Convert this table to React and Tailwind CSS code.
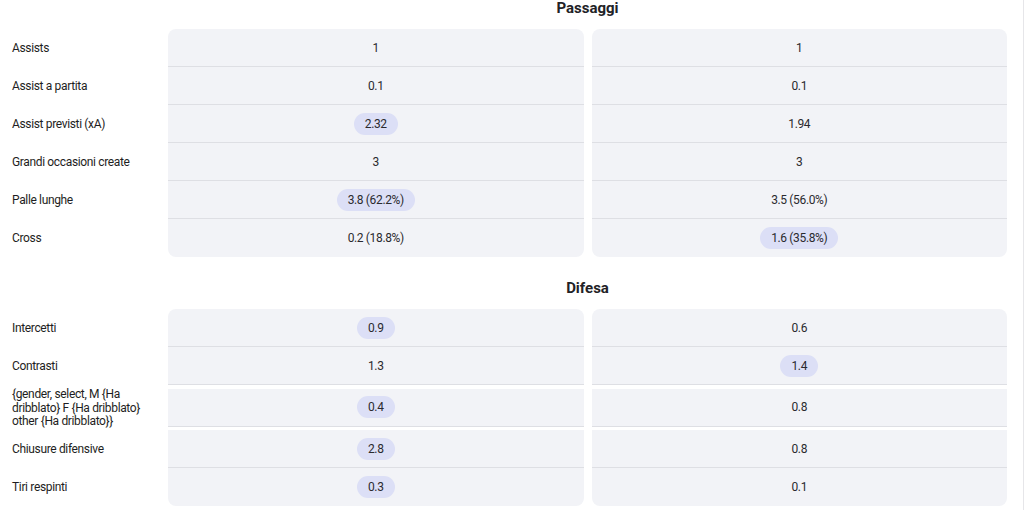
import React from "react";

const sections = [
  {
    title: "Passaggi",
    rows: [
      { label: "Assists", a: "1", b: "1" },
      { label: "Assist a partita", a: "0.1", b: "0.1" },
      { label: "Assist previsti (xA)", a: "2.32", b: "1.94", hl: "a" },
      { label: "Grandi occasioni create", a: "3", b: "3" },
      { label: "Palle lunghe", a: "3.8 (62.2%)", b: "3.5 (56.0%)", hl: "a" },
      { label: "Cross", a: "0.2 (18.8%)", b: "1.6 (35.8%)", hl: "b" },
    ],
  },
  {
    title: "Difesa",
    rows: [
      { label: "Intercetti", a: "0.9", b: "0.6", hl: "a" },
      { label: "Contrasti", a: "1.3", b: "1.4", hl: "b" },
      {
        label: ["{gender, select, M {Ha", "dribblato} F {Ha dribblato}", "other {Ha dribblato}}"],
        a: "0.4",
        b: "0.8",
        hl: "a",
        tall: true,
      },
      { label: "Chiusure difensive", a: "2.8", b: "0.8", hl: "a" },
      { label: "Tiri respinti", a: "0.3", b: "0.1", hl: "a" },
    ],
  },
];

function Cell({ value, highlight, first, last }) {
  return (
    <div
      className={
        "flex-1 h-[38px] bg-[#f2f3f7] flex items-center justify-center " +
        (last ? "h-[37px] rounded-b-lg " : "border-b border-[#dedfe4] ") +
        (first ? "rounded-t-lg" : "")
      }
    >
      {highlight ? (
        <span className="bg-[#dcdff6] rounded-full px-[11px] h-[22px] leading-[22px] inline-block">{value}</span>
      ) : (
        <span>{value}</span>
      )}
    </div>
  );
}

function Section({ title, rows, top }) {
  return (
    <div className={top}>
      <div className="flex">
        <div className="w-[168px]" />
        <div className="flex-1 pr-[16px] h-[16px] leading-[16px] flex items-center justify-center text-[15px] font-bold tracking-normal text-[#222226]">
          {title}
        </div>
      </div>
      <div className="mt-[13px]">
        {rows.map((r, i) => (
          <div key={i} className={"flex items-center " + (r.tall ? "h-[45px]" : "")}>
            <div className="w-[168px] pl-3 pr-2 pt-[2px] leading-[13.5px] text-[#1e1e22]">
              {Array.isArray(r.label)
                ? r.label.map((l, j) => (
                    <div key={j} className="whitespace-nowrap">
                      {l}
                    </div>
                  ))
                : r.label}
            </div>
            <div className="flex-1 flex gap-2 pr-[16px]">
              <Cell value={r.a} highlight={r.hl === "a"} first={i === 0} last={i === rows.length - 1} />
              <Cell value={r.b} highlight={r.hl === "b"} first={i === 0} last={i === rows.length - 1} />
            </div>
          </div>
        ))}
      </div>
    </div>
  );
}

export default function App() {
  return (
    <div
      className="w-[1024px] h-[510px] bg-white overflow-hidden border-r border-[#e6e6e9] text-[12px] tracking-[-0.35px] text-[#2a2a2e]"
      style={{ fontFamily: "Roboto, 'Noto Sans', sans-serif" }}
    >
      <Section title={sections[0].title} rows={sections[0].rows} top="" />
      <Section title={sections[1].title} rows={sections[1].rows} top="mt-[23px]" />
    </div>
  );
}
